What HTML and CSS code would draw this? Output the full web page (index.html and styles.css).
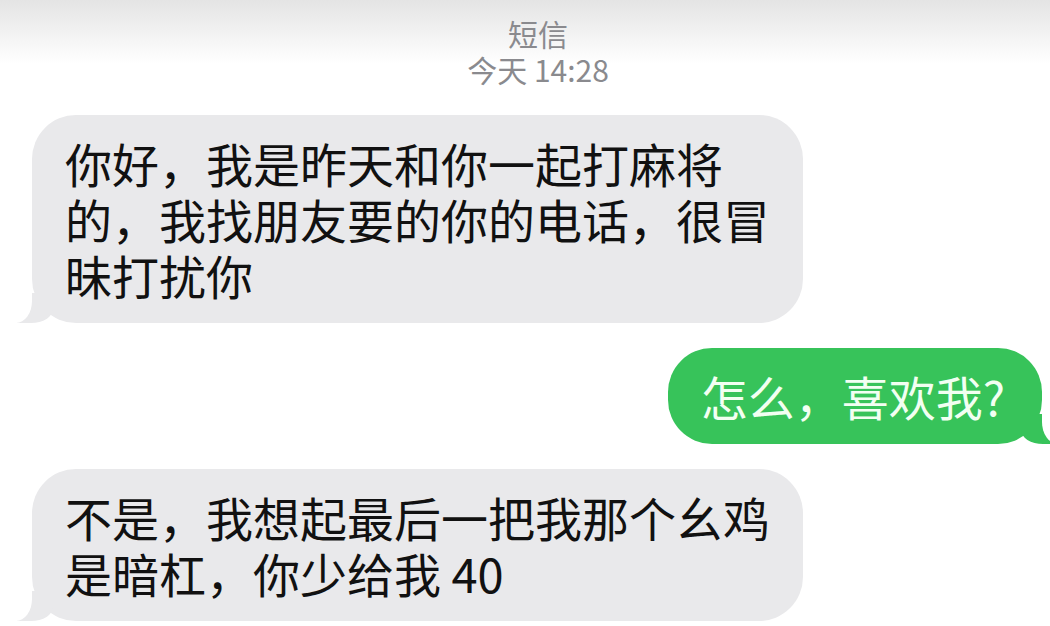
FILE: index.html
```html
<!DOCTYPE html>
<html lang="zh-CN">

<head>
    <meta charset="UTF-8">
    <meta name="viewport" content="width=device-width, initial-scale=1.0">
    <title>短信</title>

    <link rel="stylesheet" href="styles.css">
</head>

<body>
    <!-- 頂部標題 -->
    <div class="header">
        <div class="title">短信</div>
        <div class="time">今天 14:28</div>
    </div>

    <!-- 對話內容 -->
    <div class="chat">
        <div class="row">
            <div class="bubble gray wide">你好，我是昨天和你一起打麻将<br>的，我找朋友要的你的电话，很冒<br>昧打扰你</div>
        </div>

        <div class="row right">
            <div class="bubble green">怎么，喜欢我?</div>
        </div>

        <div class="row">
            <div class="bubble gray wide">不是，我想起最后一把我那个幺鸡<br>是暗杠，你少给我 40</div>
        </div>
    </div>
</body>

</html>
```

FILE: styles.css
```css
body {
    margin: 0;
    background: linear-gradient(#e4e4e4, #fff 64px);
    font-family: "Noto Sans CJK SC", "Noto Sans", sans-serif;
    overflow: hidden;
    height: 626px;
}

/* 頂部標題 */
.header {
    padding: 15px 0 0 26px;
    text-align: center;
    color: #8a8a8e;
}

.title,
.time {
    font-size: 30px;
    line-height: 36px;
}

/* 對話 */
.chat {
    display: flex;
    flex-direction: column;
    gap: 25px;
    padding: 28px 0 0 32px;
}

.row {
    display: flex;
}

.row.right {
    justify-content: flex-end;
    padding-right: 8px;
}

.bubble {
    position: relative;
    font-size: 47px;
    line-height: 56px;
    padding: 20px 35px 20px 33px;
    border-radius: 44px;
    white-space: nowrap;
}

.wide {
    width: 703px;
}

.gray {
    background-color: #e9e9eb;
    color: #111;
}

.green {
    background-color: #37c35a;
    color: #f2fff2;
    padding-right: 37px;
}

/* 氣泡尾巴 */
.bubble::before,
.bubble::after {
    content: "";
    position: absolute;
    bottom: 0;
    height: 30px;
}

.gray::before {
    left: -15px;
    width: 36px;
    background-color: #e9e9eb;
    border-bottom-right-radius: 22px 14px;
}

.gray::after {
    left: -40px;
    width: 40px;
    background-color: #fff;
    border-bottom-right-radius: 16px 22px;
}

.green::before {
    right: -15px;
    width: 36px;
    background-color: #37c35a;
    border-bottom-left-radius: 22px 14px;
}

.green::after {
    right: -40px;
    width: 40px;
    background-color: #fff;
    border-bottom-left-radius: 16px 22px;
}
```
